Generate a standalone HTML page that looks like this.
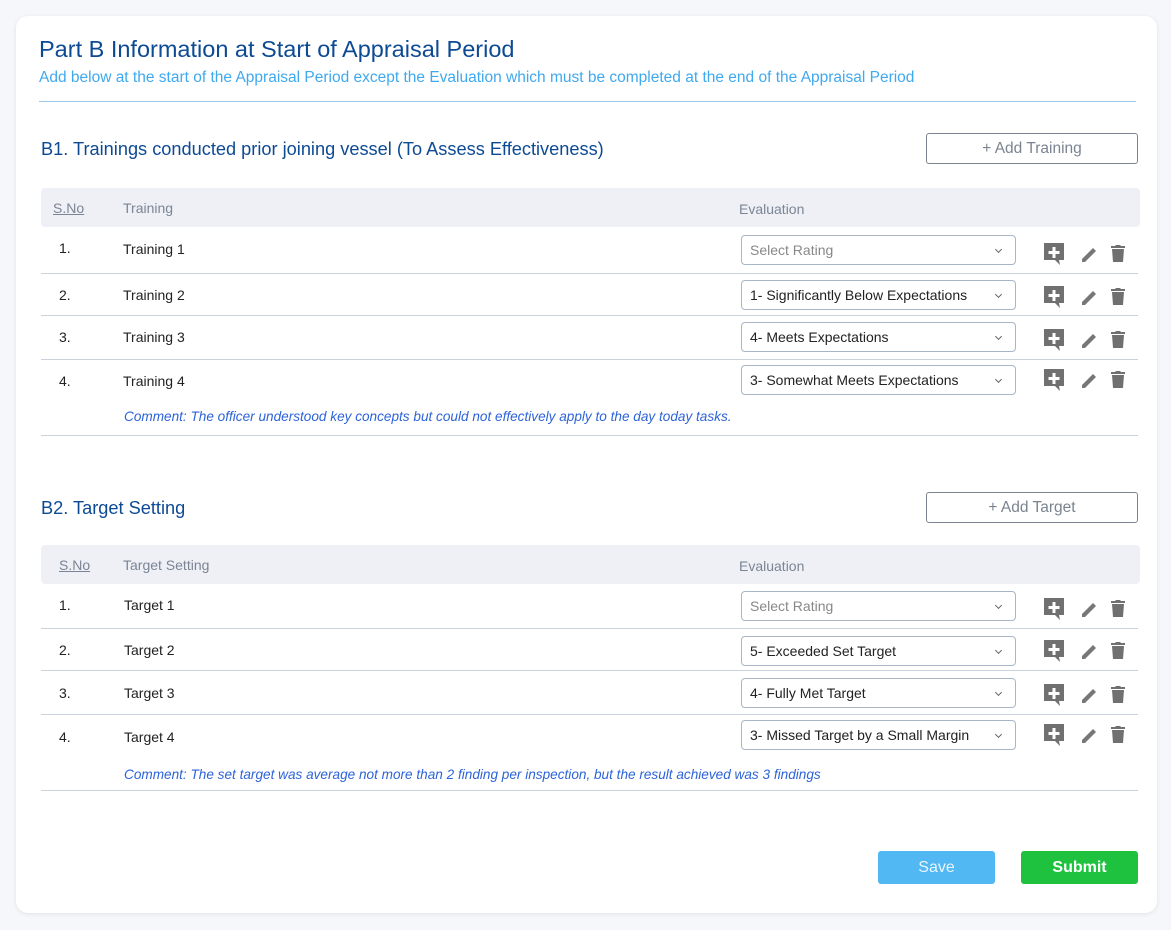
<!DOCTYPE html><html><head><style>
body{margin:0;width:1171px;height:930px;background:#f5f7fa;font-family:"Liberation Sans",sans-serif;position:relative;overflow:hidden}
.card{position:absolute;left:16px;top:16px;width:1141px;height:897px;background:#fff;border-radius:12px;box-shadow:0 1px 5px rgba(0,0,0,.09)}
.a{position:absolute;white-space:nowrap}
.h1{left:39px;top:36px;font-size:23.5px;color:#0d4a94}
.sub{left:39px;top:69px;font-size:15.5px;color:#3fa9ee}
.hr{position:absolute;left:39px;width:1097px;height:1px;background:#9ec9ea}
.st{font-size:18.2px;color:#0d4a94}
.btn{position:absolute;left:926px;width:212px;height:31px;border:1px solid #7a8490;border-radius:3px;box-sizing:border-box;text-align:center;line-height:29px;color:#7a8490;font-size:15.5px}
.th{position:absolute;left:41px;width:1099px;height:39px;background:#eef0f5;border-radius:4px}
.tc{font-size:14px;color:#7b8595}
.u{text-decoration:underline}
.td{font-size:14px;color:#222}
.line{position:absolute;left:41px;width:1097px;height:1px;background:#c9d3de}
.sel{position:absolute;left:741px;width:275px;height:30px;border:1px solid #a9b6c6;border-radius:4px;box-sizing:border-box;font-size:14px;color:#222;line-height:28px;padding-left:8px}
.sel.p{color:#888}
.sel:after{content:"";position:absolute;right:14px;top:11px;width:4px;height:4px;border-right:1px solid #666;border-bottom:1px solid #666;transform:rotate(45deg)}
.cm{font-size:13.6px;font-style:italic;color:#2d63d8}
.bt{position:absolute;top:851px;width:117px;height:33px;border-radius:3px;text-align:center;line-height:33px;font-size:16px;color:#fff}
</style></head><body>
<div class="card"></div>
<div class="a h1">Part B Information at Start of Appraisal Period</div>
<div class="a sub">Add below at the start of the Appraisal Period except the Evaluation which must be completed at the end of the Appraisal Period</div>
<div class="hr" style="top:101px"></div>

<div class="a st" style="left:41px;top:139px">B1. Trainings conducted prior joining vessel (To Assess Effectiveness)</div>
<div class="btn" style="top:133px">+ Add Training</div>
<div class="th" style="top:188px"></div>
<div class="a tc u" style="left:53px;top:200px">S.No</div>
<div class="a tc" style="left:123px;top:200px">Training</div>
<div class="a tc" style="left:739px;top:201px">Evaluation</div>

<div class="a td" style="left:59px;top:240px">1.</div><div class="a td" style="left:123px;top:241px">Training 1</div>
<div class="sel p" style="top:235px">Select Rating</div>
<div class="line" style="top:273px"></div>
<div class="a td" style="left:59px;top:287px">2.</div><div class="a td" style="left:123px;top:287px">Training 2</div>
<div class="sel" style="top:280px">1- Significantly Below Expectations</div>
<div class="line" style="top:315px"></div>
<div class="a td" style="left:59px;top:329px">3.</div><div class="a td" style="left:123px;top:329px">Training 3</div>
<div class="sel" style="top:322px">4- Meets Expectations</div>
<div class="line" style="top:359px"></div>
<div class="a td" style="left:59px;top:373px">4.</div><div class="a td" style="left:123px;top:373px">Training 4</div>
<div class="sel" style="top:365px">3- Somewhat Meets Expectations</div>
<div class="a cm" style="left:124px;top:409px">Comment: The officer understood key concepts but could not effectively apply to the day today tasks.</div>
<div class="line" style="top:435px"></div>

<div class="a st" style="left:41px;top:498px">B2. Target Setting</div>
<div class="btn" style="top:492px">+ Add Target</div>
<div class="th" style="top:545px"></div>
<div class="a tc u" style="left:59px;top:557px">S.No</div>
<div class="a tc" style="left:123px;top:557px">Target Setting</div>
<div class="a tc" style="left:739px;top:558px">Evaluation</div>

<div class="a td" style="left:59px;top:597px">1.</div><div class="a td" style="left:124px;top:597px">Target 1</div>
<div class="sel p" style="top:591px">Select Rating</div>
<div class="line" style="top:628px"></div>
<div class="a td" style="left:59px;top:642px">2.</div><div class="a td" style="left:124px;top:642px">Target 2</div>
<div class="sel" style="top:636px">5- Exceeded Set Target</div>
<div class="line" style="top:670px"></div>
<div class="a td" style="left:59px;top:685px">3.</div><div class="a td" style="left:124px;top:685px">Target 3</div>
<div class="sel" style="top:678px">4- Fully Met Target</div>
<div class="line" style="top:714px"></div>
<div class="a td" style="left:59px;top:729px">4.</div><div class="a td" style="left:124px;top:729px">Target 4</div>
<div class="sel" style="top:720px">3- Missed Target by a Small Margin</div>
<div class="a cm" style="left:124px;top:767px">Comment: The set target was average not more than 2 finding per inspection, but the result achieved was 3 findings</div>
<div class="line" style="top:790px"></div>

<svg width="1171" height="930" style="position:absolute;left:0;top:0">
<defs>
<g id="ic" fill="#707070">
<path d="M0 0h20v17h-5l1 5-5-5H0z"/>
<path d="M8.5 4h3v4h4v3h-4v4h-3v-4h-4V8h4z" fill="#fff"/>
<path d="M38 16l11-11 3 3-11 11H38z" fill="#777"/>
<path d="M72 2h4l1 1h4v2H67V3h4zM68 6h12l-1 13H69z"/>
</g>
</defs>
<use href="#ic" x="1044" y="243"/><use href="#ic" x="1044" y="286"/><use href="#ic" x="1044" y="329"/><use href="#ic" x="1044" y="369"/>
<use href="#ic" x="1044" y="598"/><use href="#ic" x="1044" y="640"/><use href="#ic" x="1044" y="684"/><use href="#ic" x="1044" y="724"/>
</svg>

<div class="bt" style="left:878px;background:#52b8f3;color:#e8f5ff">Save</div>
<div class="bt" style="left:1021px;background:#1fc23f;font-weight:bold">Submit</div>
</body></html>
